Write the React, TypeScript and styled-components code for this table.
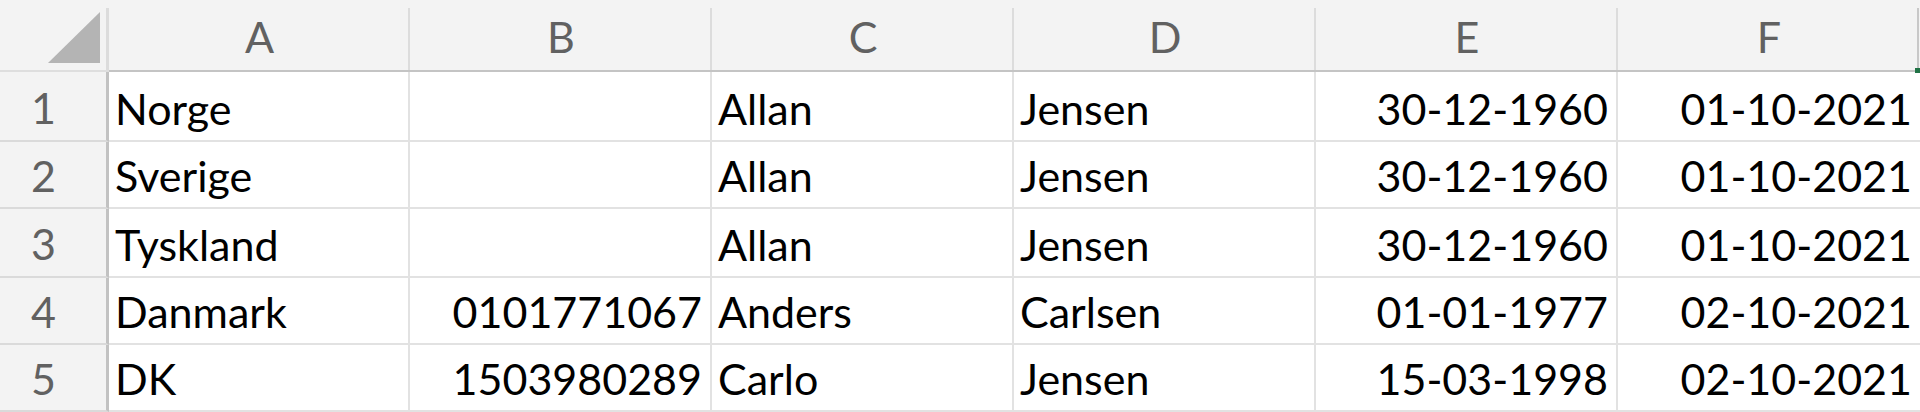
import React from "react";
import styled, { createGlobalStyle } from "styled-components";

const GlobalStyle = createGlobalStyle`
  html, body {
    margin: 0;
    padding: 0;
    background: #ffffff;
  }
  body {
    font-family: Lato, "Open Sans", "Liberation Sans", sans-serif;
    overflow: hidden;
  }
`;

const Sheet = styled.div`
  position: relative;
  display: grid;
  grid-template-columns: 109px 301px 302px 302px 302px 302px 302px;
  grid-template-rows: 72px 70px 67px 69px 67px 67px;
  width: 1920px;
  height: 412px;
  overflow: hidden;
  background: #ffffff;
  font-size: 43px;
  line-height: 1;
`;

const Corner = styled.div`
  position: relative;
  background: #f3f3f3;
  border-bottom: 2px solid #dedede;
  display: flex;
  align-items: flex-end;
  justify-content: flex-end;
  padding: 0 9px 7px 0;
  box-sizing: border-box;

  &::after {
    content: "";
    position: absolute;
    right: 0;
    top: 8px;
    bottom: 0;
    width: 3px;
    background: #dcdcdc;
  }
`;

const ColHeader = styled.div<{ $last?: boolean }>`
  position: relative;
  background: #f3f3f3;
  border-bottom: 2px solid #c4c4c4;
  color: #616161;
  display: flex;
  align-items: center;
  justify-content: center;
  padding-top: 3px;
  box-sizing: border-box;

  &::after {
    content: "";
    position: absolute;
    right: ${(p) => (p.$last ? "1px" : "0")};
    top: 8px;
    bottom: 0;
    width: 2px;
    background: ${(p) => (p.$last ? "#c8c8c8" : "#dcdcdc")};
  }
`;

const RowHeader = styled.div`
  background: #f3f3f3;
  border-right: 3px solid #c2c2c2;
  border-bottom: 2px solid #dadada;
  color: #616161;
  display: flex;
  align-items: center;
  justify-content: center;
  padding-right: 19px;
  padding-top: 2px;
  box-sizing: border-box;
`;

const Cell = styled.div<{ $align: "left" | "right"; $last?: boolean }>`
  border-right: ${(p) => (p.$last ? "none" : "2px solid #e2e2e2")};
  border-bottom: 2px solid #e2e2e2;
  color: #000000;
  display: flex;
  align-items: flex-end;
  justify-content: ${(p) => (p.$align === "right" ? "flex-end" : "flex-start")};
  padding: 0 ${(p) => (p.$align === "right" ? "8px" : "0")} 10px
    ${(p) => (p.$align === "left" ? "6px" : "0")};
  box-sizing: border-box;
  white-space: nowrap;
  overflow: hidden;
`;

const Handle = styled.div`
  position: absolute;
  right: 0;
  top: 68px;
  width: 5px;
  height: 5px;
  background: #217346;
`;

type Align = "left" | "right";

const columns = ["A", "B", "C", "D", "E", "F"];
const aligns: Align[] = ["left", "right", "left", "left", "right", "right"];

const rows: string[][] = [
  ["Norge", "", "Allan", "Jensen", "30-12-1960", "01-10-2021"],
  ["Sverige", "", "Allan", "Jensen", "30-12-1960", "01-10-2021"],
  ["Tyskland", "", "Allan", "Jensen", "30-12-1960", "01-10-2021"],
  ["Danmark", "0101771067", "Anders", "Carlsen", "01-01-1977", "02-10-2021"],
  ["DK", "1503980289", "Carlo", "Jensen", "15-03-1998", "02-10-2021"],
];

export default function App() {
  return (
    <>
      <GlobalStyle />
      <Sheet>
        <Corner>
          <svg width="52" height="51" viewBox="0 0 52 51">
            <polygon points="0,51 52,51 52,0" fill="#b4b4b4" />
          </svg>
        </Corner>
        {columns.map((c, i) => (
          <ColHeader key={c} $last={i === columns.length - 1}>
            {c}
          </ColHeader>
        ))}
        {rows.map((r, ri) => (
          <React.Fragment key={ri}>
            <RowHeader>{ri + 1}</RowHeader>
            {r.map((v, ci) => (
              <Cell key={ci} $align={aligns[ci]} $last={ci === r.length - 1}>
                {v}
              </Cell>
            ))}
          </React.Fragment>
        ))}
        <Handle />
      </Sheet>
    </>
  );
}
